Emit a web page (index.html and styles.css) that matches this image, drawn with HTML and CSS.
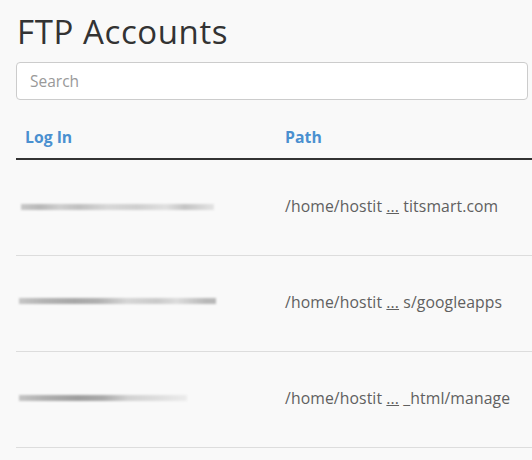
FILE: index.html
```html
<!DOCTYPE html>
<html>
<head>
<meta charset="utf-8">
<link rel="stylesheet" href="styles.css">
</head>
<body>
<div class="page">
  <h1 class="title">FTP Accounts</h1>
  <input class="search" type="text" placeholder="Search">
  <div class="table-wrap">
    <table class="accounts">
      <thead>
        <tr>
          <th class="col-login">Log In</th>
          <th class="col-path">Path</th>
        </tr>
      </thead>
      <tbody>
        <tr>
          <td class="col-login"><span class="redact r1"></span></td>
          <td class="col-path">/home/hostit <span class="ellip">...</span> titsmart.com</td>
        </tr>
        <tr>
          <td class="col-login"><span class="redact r2"></span></td>
          <td class="col-path">/home/hostit <span class="ellip">...</span> s/googleapps</td>
        </tr>
        <tr>
          <td class="col-login"><span class="redact r3"></span></td>
          <td class="col-path">/home/hostit <span class="ellip">...</span> _html/manage</td>
        </tr>
      </tbody>
    </table>
  </div>
</div>
</body>
</html>
```

FILE: styles.css
```css
html, body {
  margin: 0;
  padding: 0;
  background: #f9f9f9;
  font-family: "Open Sans", "Liberation Sans", sans-serif;
}
.page {
  padding: 0 4px 0 16px;
  overflow: hidden;
}
.title {
  margin: 10px 0 8px 1px;
  font-size: 33px;
  font-weight: 400;
  line-height: 44px;
  color: #333;
  letter-spacing: 0.6px;
}
.search {
  display: block;
  box-sizing: border-box;
  width: 100%;
  height: 38px;
  margin: 0;
  padding: 0 13px;
  border: 1px solid #cccccc;
  border-radius: 4px;
  background: #fff;
  font-family: "Open Sans", "Liberation Sans", sans-serif;
  font-size: 15.5px;
  color: #333;
}
.search::placeholder {
  color: #999;
}
.table-wrap {
  width: 600px;
}
.accounts {
  width: 600px;
  table-layout: fixed;
  border-collapse: collapse;
  font-size: 15.75px;
  line-height: 20px;
}
.accounts th {
  text-align: left;
  font-weight: 700;
  color: #4a90d0;
  padding: 27px 9px 11px 9px;
  border-bottom: 2px solid #333;
}
.accounts td {
  padding: 36px 9px 39px 9px;
  color: #606060;
  border-bottom: 1px solid #dddddd;
  vertical-align: top;
  white-space: nowrap;
}
.col-login {
  width: 242px;
}
.col-path {
  letter-spacing: 0.1px;
}
.ellip {
  text-decoration: underline;
}
.redact {
  display: block;
  height: 6px;
  margin-top: 8px;
  filter: blur(1px);
}
.r1 {
  margin-left: -4px;
  width: 193px;
  background: linear-gradient(90deg, #c8c8c8 0%, #b8b8b8 10%, #cfcfcf 20%, #c0c0c0 30%, #d8d8d8 45%, #cfcfcf 60%, #e0e0e0 75%, #c4c4c4 85%, #e4e4e4 100%);
}
.r2 {
  margin-left: -6px;
  margin-top: 6px;
  width: 197px;
  background: linear-gradient(90deg, #c6c6c6 0%, #b4b4b4 12%, #a8a8a8 28%, #b0b0b0 40%, #d6d6d6 55%, #cacaca 70%, #dcdcdc 80%, #b8b8b8 95%);
}
.r3 {
  margin-left: -6px;
  margin-top: 7px;
  width: 168px;
  background: linear-gradient(90deg, #c4c4c4 0%, #b0b0b0 15%, #9e9e9e 35%, #aaaaaa 50%, #d2d2d2 65%, #dcdcdc 80%, #ececec 100%);
}
```
